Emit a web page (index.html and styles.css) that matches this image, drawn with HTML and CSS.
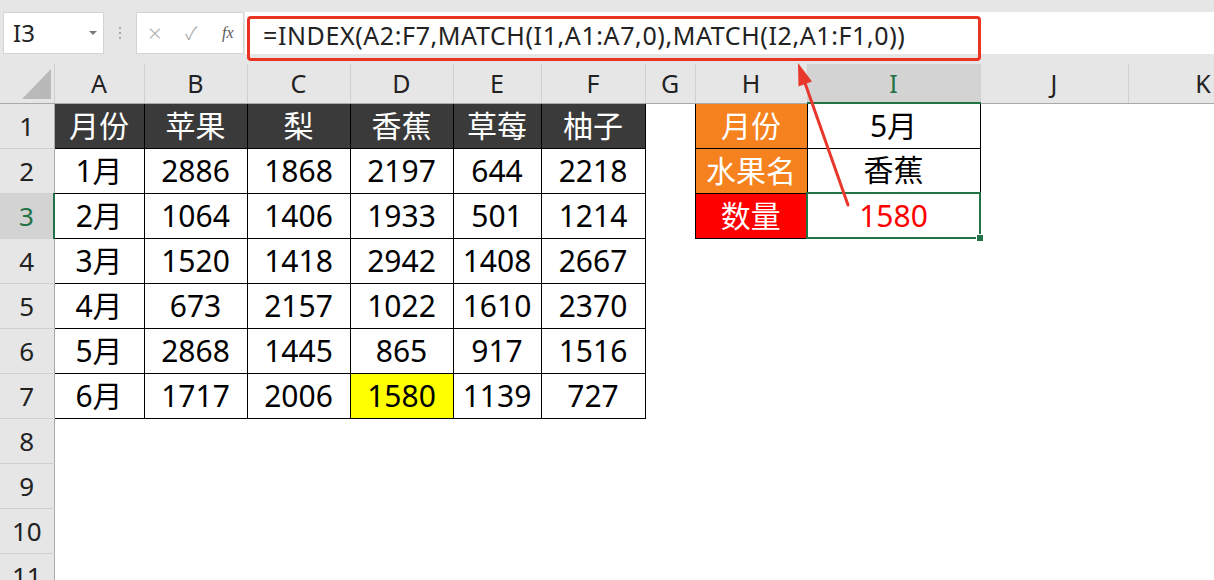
FILE: index.html
```html
<!DOCTYPE html>
<html lang="zh">
<head>
<meta charset="utf-8">
<title>INDEX MATCH</title>
<link rel="stylesheet" href="styles.css">
</head>
<body>
<div class="app">
  <div class="toolbar">
    <div class="namebox"><span class="ref">I3</span><span class="caret"></span></div>
    <div class="sep"><i></i><i></i><i></i></div>
    <div class="fxbox">
      <span class="ico cancel">×</span>
      <span class="ico ok">✓</span>
      <span class="ico fx">fx</span>
    </div>
    <div class="formula">
      <span class="ftext">=INDEX(A2:F7,MATCH(I1,A1:A7,0),MATCH(I2,A1:F1,0))</span>
      <div class="hl"></div>
    </div>
  </div>

  <table class="sheet">
    <colgroup>
      <col class="c-rh"><col class="c-a"><col class="c-b"><col class="c-c"><col class="c-d"><col class="c-e"><col class="c-f"><col class="c-g"><col class="c-h"><col class="c-i"><col class="c-j"><col class="c-k">
    </colgroup>
    <thead>
      <tr class="hdr">
        <th class="corner"><svg width="54" height="38" viewBox="0 0 54 38"><polygon points="22,35 51,35 51,5" fill="#b9b9b9"/></svg></th>
        <th>A</th><th>B</th><th>C</th><th>D</th><th>E</th><th>F</th><th>G</th><th>H</th><th class="sel">I</th><th>J</th><th>K</th>
      </tr>
    </thead>
    <tbody>
      <tr>
        <th class="rh">1</th>
        <td class="t dk">月份</td><td class="t dk">苹果</td><td class="t dk">梨</td><td class="t dk">香蕉</td><td class="t dk">草莓</td><td class="t dk">柚子</td>
        <td></td><td class="t or">月份</td><td class="t">5月</td><td></td><td></td>
      </tr>
      <tr>
        <th class="rh">2</th>
        <td class="t">1月</td><td class="t">2886</td><td class="t">1868</td><td class="t">2197</td><td class="t">644</td><td class="t">2218</td>
        <td></td><td class="t or">水果名</td><td class="t">香蕉</td><td></td><td></td>
      </tr>
      <tr>
        <th class="rh sel">3</th>
        <td class="t">2月</td><td class="t">1064</td><td class="t">1406</td><td class="t">1933</td><td class="t">501</td><td class="t">1214</td>
        <td></td><td class="t rd">数量</td><td class="t active">1580<span class="handle"></span></td><td></td><td></td>
      </tr>
      <tr>
        <th class="rh">4</th>
        <td class="t">3月</td><td class="t">1520</td><td class="t">1418</td><td class="t">2942</td><td class="t">1408</td><td class="t">2667</td>
        <td></td><td></td><td></td><td></td><td></td>
      </tr>
      <tr>
        <th class="rh">5</th>
        <td class="t">4月</td><td class="t">673</td><td class="t">2157</td><td class="t">1022</td><td class="t">1610</td><td class="t">2370</td>
        <td></td><td></td><td></td><td></td><td></td>
      </tr>
      <tr>
        <th class="rh">6</th>
        <td class="t">5月</td><td class="t">2868</td><td class="t">1445</td><td class="t">865</td><td class="t">917</td><td class="t">1516</td>
        <td></td><td></td><td></td><td></td><td></td>
      </tr>
      <tr>
        <th class="rh">7</th>
        <td class="t">6月</td><td class="t">1717</td><td class="t">2006</td><td class="t yl">1580</td><td class="t">1139</td><td class="t">727</td>
        <td></td><td></td><td></td><td></td><td></td>
      </tr>
      <tr><th class="rh">8</th><td></td><td></td><td></td><td></td><td></td><td></td><td></td><td></td><td></td><td></td><td></td></tr>
      <tr><th class="rh">9</th><td></td><td></td><td></td><td></td><td></td><td></td><td></td><td></td><td></td><td></td><td></td></tr>
      <tr><th class="rh">10</th><td></td><td></td><td></td><td></td><td></td><td></td><td></td><td></td><td></td><td></td><td></td></tr>
      <tr><th class="rh">11</th><td></td><td></td><td></td><td></td><td></td><td></td><td></td><td></td><td></td><td></td><td></td></tr>
    </tbody>
  </table>

  <svg class="arrow" width="1214" height="580" viewBox="0 0 1214 580">
    <line x1="805" y1="83" x2="848" y2="205" stroke="#e8382c" stroke-width="3" stroke-linecap="round"/>
    <polygon points="798,63 798.5,86.5 812,81.5" fill="#e8382c"/>
  </svg>
</div>
</body>
</html>
```

FILE: styles.css
```css
html, body {
  margin: 0;
  padding: 0;
  background: #ffffff;
}
.app {
  position: relative;
  width: 1214px;
  height: 580px;
  overflow: hidden;
  font-family: "Noto Sans", "Noto Sans CJK SC", sans-serif;
  color: #000;
}

/* ---------- formula bar ---------- */
.toolbar {
  height: 64px;
  box-sizing: border-box;
  padding-top: 12px;
  background: #e6e6e6;
  display: flex;
  align-items: flex-start;
}
.namebox {
  margin-left: 3px;
  width: 101px;
  height: 42px;
  background: #fff;
  border: 1px solid #d4d4d4;
  box-sizing: border-box;
  display: flex;
  align-items: center;
  justify-content: space-between;
  padding: 0 6px 0 9px;
}
.ref {
  font-size: 24px;
  color: #222;
  line-height: 1;
}
.caret {
  width: 0;
  height: 0;
  border-left: 4px solid transparent;
  border-right: 4px solid transparent;
  border-top: 4px solid #7a7a7a;
}
.sep {
  width: 32px;
  height: 42px;
  display: flex;
  flex-direction: column;
  align-items: center;
  justify-content: center;
  gap: 3px;
}
.sep i {
  width: 2px;
  height: 2px;
  background: #a8a8a8;
  display: block;
}
.fxbox {
  width: 108px;
  height: 42px;
  background: #fff;
  border: 1px solid #d4d4d4;
  box-sizing: border-box;
  display: flex;
  align-items: center;
  padding-left: 11px;
}
.ico {
  display: block;
  line-height: 1;
}
.cancel {
  font-size: 24px;
  color: #b3b3b3;
  width: 36px;
  font-weight: 300;
}
.ok {
  font-size: 18px;
  color: #b3b3b3;
  width: 37px;
  padding-left: 1px;
}
.fx {
  font-family: "Liberation Serif", serif;
  font-style: italic;
  font-size: 16px;
  color: #5a5a5a;
}
.formula {
  position: relative;
  flex: 1;
  height: 42px;
  margin-left: 1px;
  background: #fff;
  display: flex;
  align-items: center;
  padding-left: 18px;
}
.ftext {
  font-size: 25px;
  color: #222;
  letter-spacing: 0.6px;
  line-height: 1;
  position: relative;
  top: 2px;
}
.hl {
  position: absolute;
  left: 2px;
  top: 4px;
  width: 734px;
  height: 45px;
  box-sizing: border-box;
  border: 3px solid #ea3323;
  border-radius: 4px;
}

/* ---------- sheet ---------- */
.sheet {
  border-collapse: collapse;
  table-layout: fixed;
  width: 1278px;
}
.c-rh { width: 54px; }
.c-a { width: 90px; }
.c-b { width: 103px; }
.c-c { width: 103px; }
.c-d { width: 103px; }
.c-e { width: 88px; }
.c-f { width: 104px; }
.c-g { width: 50px; }
.c-h { width: 112px; }
.c-i { width: 173px; }
.c-j { width: 148px; }
.c-k { width: 150px; }

.hdr th {
  height: 38px;
  padding: 0;
  background: #e6e6e6;
  font-weight: normal;
  font-size: 25px;
  color: #222;
  border-left: 1px solid #d0d0d0;
  border-right: 1px solid #d0d0d0;
  border-bottom: 1px solid #a9a9a9;
  text-align: center;
  vertical-align: middle;
  line-height: 1;
}
.hdr th.corner {
  border-left: none;
  line-height: 0;
}
.hdr th.corner svg { display: block; }
.hdr th.sel {
  background: #d3d3d3;
  color: #217346;
  border-bottom: 2px solid #217346;
}
tbody tr { height: 45px; }
td {
  padding: 0;
  text-align: center;
  vertical-align: middle;
  font-size: 30px;
  line-height: 1;
}
.rh {
  padding: 0;
  background: #e6e6e6;
  font-weight: normal;
  font-size: 26px;
  color: #222;
  text-align: center;
  border-bottom: 1px solid #cfcfcf;
  border-right: 1px solid #a9a9a9;
  line-height: 1;
}
.rh.sel {
  background: #d3d3d3;
  color: #217346;
  border-right: 2px solid #217346;
}
td.t { border: 1px solid #000; }
td.dk { background: #3a3a3a; color: #fff; }
td.or { background: #f5821f; color: #fff; }
td.rd { background: #ff0000; color: #fff; }
td.yl { background: #ffff00; }
td.active {
  position: relative;
  color: #ff0000;
  border: 2px solid #217346;
}
.handle {
  position: absolute;
  right: -5px;
  bottom: -5px;
  width: 6px;
  height: 6px;
  background: #217346;
  border: 1px solid #fff;
}

.arrow {
  position: absolute;
  left: 0;
  top: 0;
  pointer-events: none;
}
```
